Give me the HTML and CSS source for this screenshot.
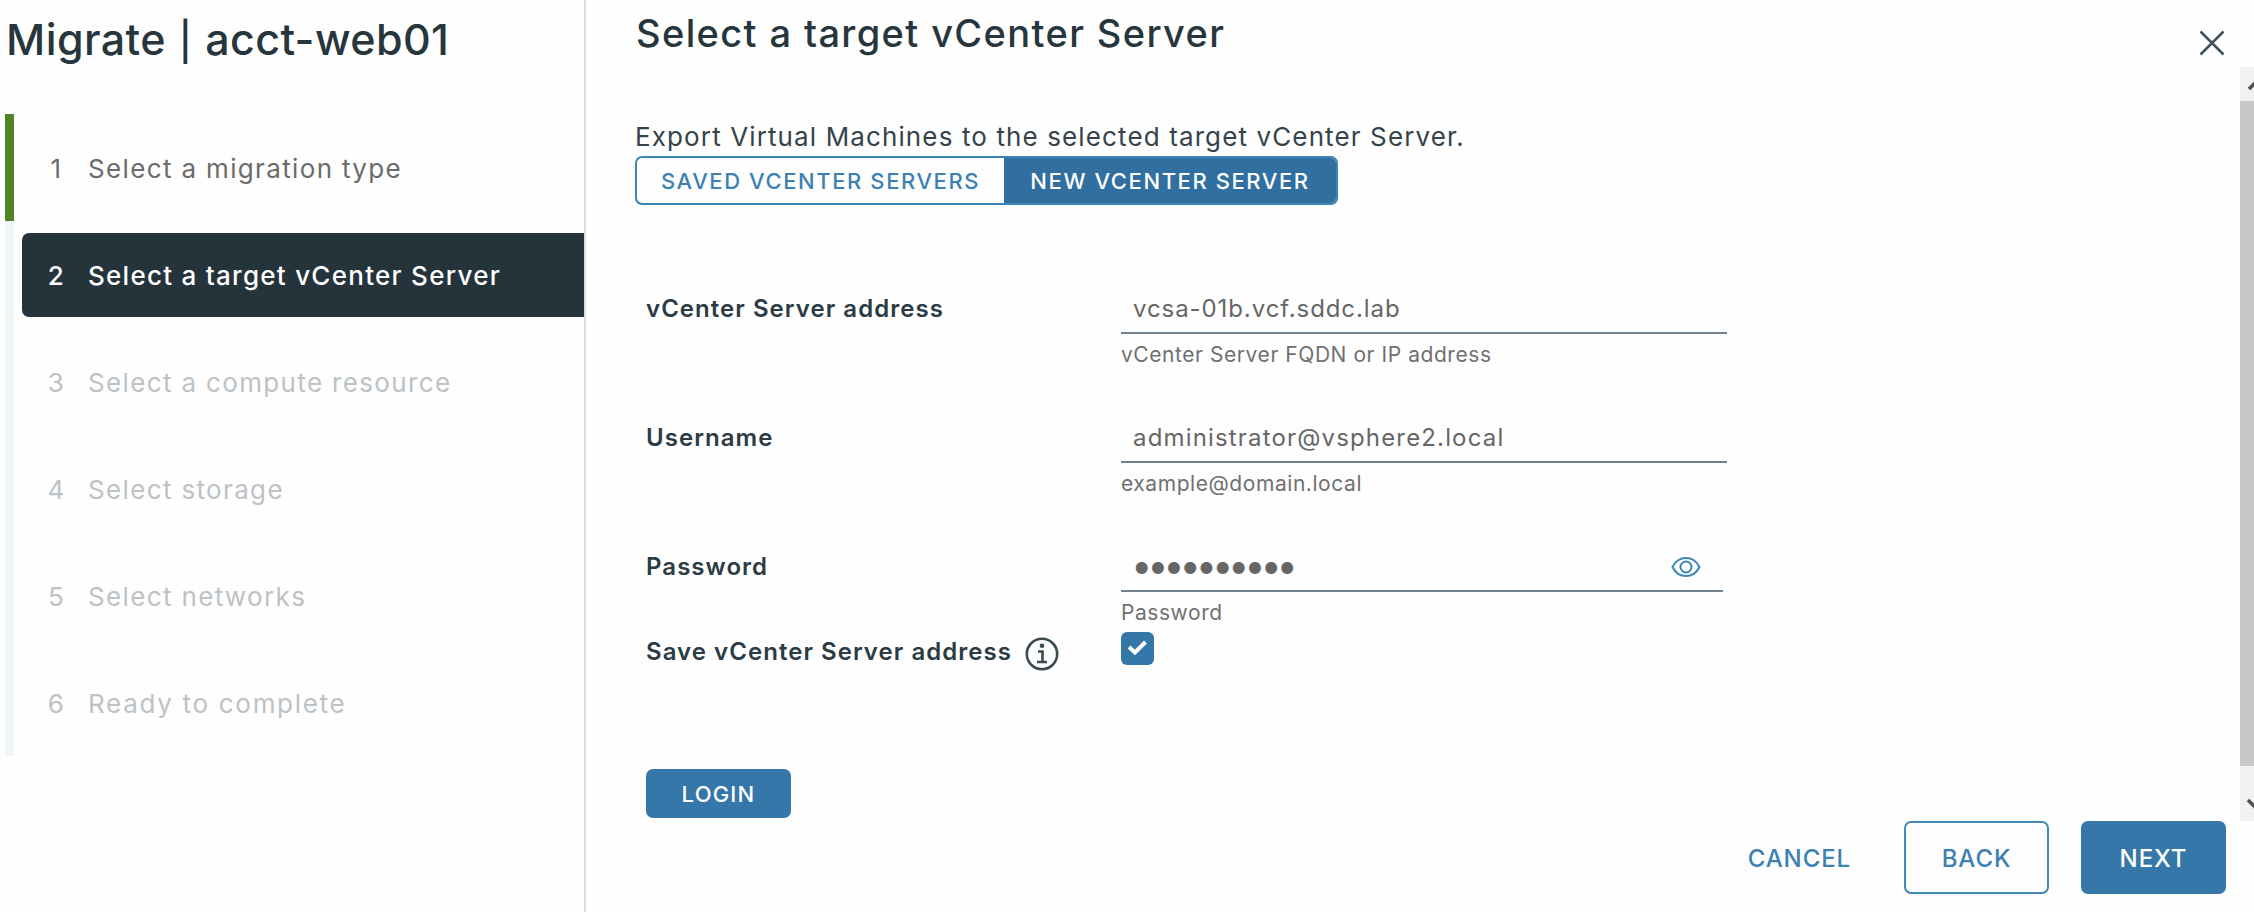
FILE: index.html
```html
<!DOCTYPE html>
<html lang="en">
<head>
<meta charset="utf-8">
<title>Migrate</title>
<link rel="stylesheet" href="styles.css">
</head>
<body>
<div class="wizard">
  <aside class="sidebar">
    <h1 class="title">Migrate <span class="divider">|</span> acct-web01</h1>
    <ol class="steps">
      <li class="step done"><div class="step-box"><span class="num">1</span><span>Select a migration type</span></div></li>
      <li class="step current"><div class="step-box"><span class="num">2</span><span>Select a target vCenter Server</span></div></li>
      <li class="step"><div class="step-box"><span class="num">3</span><span>Select a compute resource</span></div></li>
      <li class="step"><div class="step-box"><span class="num">4</span><span>Select storage</span></div></li>
      <li class="step"><div class="step-box"><span class="num">5</span><span>Select networks</span></div></li>
      <li class="step"><div class="step-box"><span class="num">6</span><span class="ready">Ready to complete</span></div></li>
    </ol>
  </aside>
  <main class="main">
    <header class="header">
      <h2 class="heading">Select a target vCenter Server</h2>
      <svg class="close" viewBox="0 0 26 26"><path d="M1.5 1.5 24.5 24.5M24.5 1.5 1.5 24.5"/></svg>
    </header>
    <div class="body">
      <section class="content">
        <p class="intro">Export Virtual Machines to the selected target vCenter Server.</p>
        <div class="toggle">
          <button class="tab">SAVED VCENTER SERVERS</button>
          <button class="tab selected">NEW VCENTER SERVER</button>
        </div>
        <form class="form">
          <label class="label">vCenter Server address</label>
          <div class="field"><div class="input address">vcsa-01b.vcf.sddc.lab</div><div class="help">vCenter Server FQDN or IP address</div></div>
          <label class="label">Username</label>
          <div class="field"><div class="input">administrator@vsphere2.local</div><div class="help">example@domain.local</div></div>
          <label class="label">Password</label>
          <div class="field">
            <div class="input password"><span class="dots">••••••••••</span>
              <svg class="eye" viewBox="0 0 30 22"><path d="M1.500 11C4.500 5 9.500 2 15 2s10.500 3 13.500 9C25.500 17 20.500 20 15 20S4.500 17 1.500 11Z"/><circle cx="15" cy="11" r="5.500"/></svg>
            </div>
            <div class="help">Password</div>
          </div>
          <label class="label save">Save vCenter Server address
            <svg class="info" viewBox="0 0 34 34"><circle cx="17" cy="17" r="15.200"/><path d="M13 14.500h4.500v10.500M12 25h10"/><circle class="dot" cx="17" cy="8.800" r="2.300"/></svg></label>
          <div class="field"><div class="checkbox"><svg viewBox="0 0 33 33"><path d="M8 15l6 5.500L24.500 10"/></svg></div></div>
        </form>
        <button class="btn primary login">LOGIN</button>
      </section>
      <div class="scrollbar">
        <svg viewBox="0 0 14 34"><path d="M9 22l8-8 8 8"/></svg>
        <div class="thumb"></div>
        <svg viewBox="0 0 14 55"><path d="M8 34l8 8 8-8"/></svg>
      </div>
    </div>
    <footer class="footer">
      <button class="btn link">CANCEL</button>
      <button class="btn outline">BACK</button>
      <button class="btn primary">NEXT</button>
    </footer>
  </main>
</div>
</body>
</html>
```
FILE: styles.css
```css
* { box-sizing: border-box; }
body { margin: 0; background: #fefefe; color: #27353d; font-family: Inter, "Liberation Sans", sans-serif; }
h1, h2, p, ol { margin: 0; padding: 0; font-weight: 400; }
button { font: inherit; letter-spacing: inherit; border: 0; background: none; padding: 0; }
svg { fill: none; display: block; }

.wizard { display: flex; width: 2254px; height: 912px; overflow: hidden; }

.sidebar { width: 586px; flex: none; border-right: 2px solid #d8dde1; padding-left: 5px; }
.title { height: 114px; padding: 14px 0 0 1px; font-size: 43px; font-weight: 450; line-height: 50px; letter-spacing: 0.4px; white-space: nowrap; }
.divider { font-size: 38px; margin: 0 1px; }
.steps { list-style: none; }
.step { height: 107px; padding: 12px 0 11px 8px; border-left: 9px solid #eff6f8; color: #bcc2c6; font-size: 26px; letter-spacing: 1.35px; }
.step-box { height: 84px; display: flex; align-items: center; gap: 23px; border-radius: 7px 0 0 7px; padding-left: 26px; white-space: nowrap; }
.num { width: 17px; display: flex; justify-content: center; }
.ready { letter-spacing: 1.7px; }
.step.done { border-color: #4f8424; color: #6b6b6b; }
.step.current { color: #fff; font-weight: 500; letter-spacing: 1.27px; }
.step.current .step-box { background: #25333b; }

.main { flex: 1; display: flex; flex-direction: column; }
.header { height: 67px; display: flex; justify-content: space-between; padding: 8px 29px 0 50px; }
.heading { font-size: 38px; line-height: 50px; font-weight: 500; letter-spacing: 1.38px; }
.close { width: 26px; height: 26px; margin-top: 22px; stroke: #42525b; stroke-width: 2.5px; }

.body { height: 754px; display: flex; justify-content: space-between; }
.content { padding: 52px 0 0 49px; }
.intro { font-size: 26px; line-height: 36px; margin-bottom: 1px; letter-spacing: 1.12px; white-space: nowrap; color: #35434b; }
.toggle { display: flex; width: 703px; height: 49px; border: 2px solid #3c84b4; border-radius: 7px; overflow: hidden; font-size: 22px; font-weight: 500; letter-spacing: 1.58px; }
.tab { width: 367px; color: #3c81b1; white-space: nowrap; }
.tab.selected { flex: 1; background: #306f9f; color: #fff; }

.form { display: grid; grid-template-columns: 475px 606px; grid-template-rows: 129px 129px 85px 133px; padding: 88px 0 0 11px; }
.label { font-size: 24px; line-height: 32px; font-weight: 600; letter-spacing: 1.04px; color: #2c3b44; white-space: nowrap; }
.label.save { display: flex; gap: 13px; }
.field { font-size: 24px; color: #666; }
.input { height: 41px; border-bottom: 2px solid #71808a; padding-left: 12px; line-height: 32px; letter-spacing: 1.16px; }
.input.address { letter-spacing: 0.92px; }
.input.password { width: 602px; display: flex; align-items: flex-start; justify-content: space-between; padding-right: 22px; }
.dots { font-size: 38px; line-height: 28px; letter-spacing: -5.2px; margin-left: -2px; }
.eye { width: 30px; height: 22px; margin-top: 5px; stroke: #3c86b8; stroke-width: 2px; }
.help { font-size: 21px; line-height: 28px; padding-top: 7px; letter-spacing: 0.56px; color: #707070; }
.info { width: 34px; height: 34px; stroke: #3c4a53; stroke-width: 2.6px; margin-top: 1px; }
.info .dot { fill: #3c4a53; stroke: none; }
.checkbox { width: 33px; height: 33px; background: #3577a9; border-radius: 6px; margin-top: -4px; }
.checkbox path { stroke: #fff; stroke-width: 4px; }

.btn { height: 73px; width: 145px; border-radius: 7px; font-size: 25px; font-weight: 500; letter-spacing: 0.5px; }
.primary { background: #3577a9; color: #fff; }
.outline { border: 2px solid #4189b9; color: #3c81b1; }
.link { width: auto; color: #3c81b1; }
.login { height: 49px; margin-left: 11px; font-size: 22px; letter-spacing: 1.2px; }
.footer { display: flex; justify-content: flex-end; padding-right: 28px; gap: 32px; }
.footer .link { margin-right: 21px; }
.footer .btn { padding-top: 2px; font-size: 24px; font-weight: 550; letter-spacing: 0.9px; }

.scrollbar { width: 14px; background: #f1f1f1; display: flex; flex-direction: column; }
.scrollbar svg { width: 14px; flex: none; }
.scrollbar path { stroke: #505050; stroke-width: 3.5px; }
.thumb { flex: 1; background: #c8c8c8; }
```
